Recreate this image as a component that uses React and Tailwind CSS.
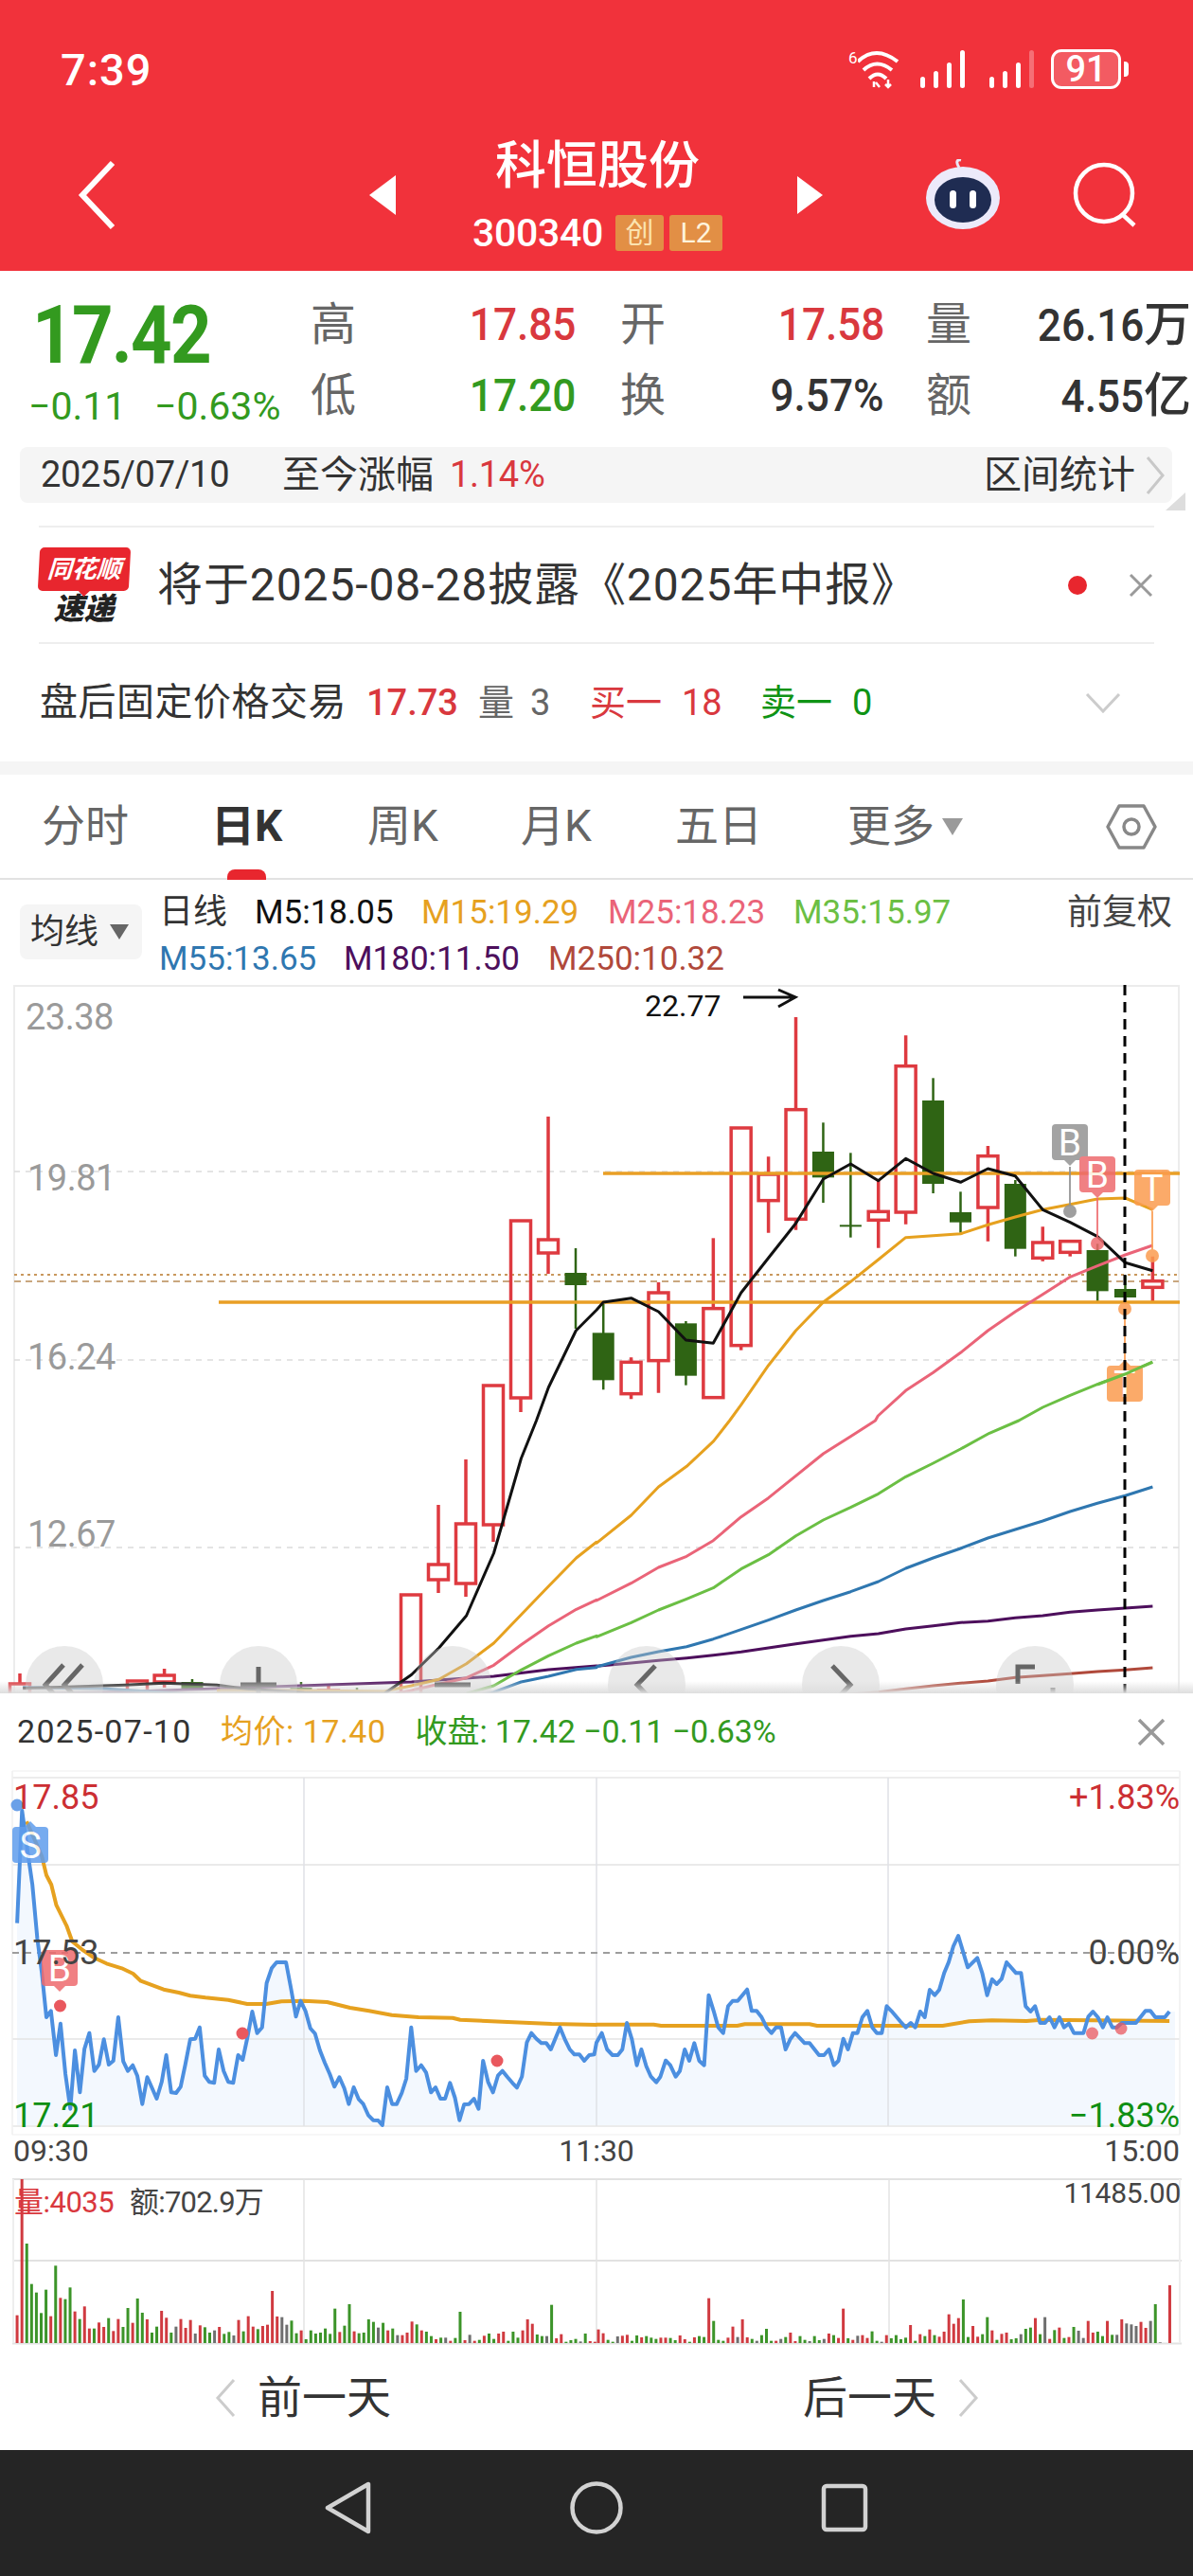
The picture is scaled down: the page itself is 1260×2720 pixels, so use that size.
const RED = '#d9383e';
const GREEN = '#339a1f';

// chart coordinates were read off zoomed crops, these map them back to page px
const za = ([x, y]) => [x / 2.489, 1030 + y / 3];
const zb = ([x, y]) => [630 + x / 2.489, 1030 + y / 3];
const zc = ([x, y]) => [x / 2.489, 1500 + y / 3];
const zd = ([x, y]) => [630 + x / 2.489, 1500 + y / 3];
const ze = ([x, y]) => [x / 2.489, 1790 + y / 3];
const zf = ([x, y]) => [630 + x / 2.489, 1790 + y / 3];
const pts = (list) => list.map((p) => p.map((n) => n.toFixed(1)).join(',')).join(' ');

// x, kind, wick top, body top, body bottom, wick bottom (page px)
const leftCandles = [
  [21, 'r', 1767, 1778, 1795, 1795],
  [145, 'r', 1775, 1775, 1787, 1787],
  [173.6, 'r', 1762, 1769, 1776, 1782],
  [203, 'g', 1773, 1776, 1783, 1785],
  [318, 'g', 1776, 1782, 1792, 1792],
  [347, 'r', 1778, 1785, 1795, 1795],
  [377, 'g', 1782, 1786, 1795, 1795],
  [434, 'r', 1684, 1684, 1795, 1795],
  [463, 'r', 1589, 1652, 1668, 1682],
  [492, 'r', 1541, 1609, 1672, 1686],
  [521, 'r', 1463, 1463, 1610, 1628],
  [550, 'r', 1289, 1289, 1476, 1491],
  [579, 'r', 1179, 1309, 1323, 1345],
  [608, 'g', 1318, 1344, 1357, 1403],
];
// same order, y still in crop units of the right half
const rightCandles = [
  [18, 'g', 1040, 1132, 1282, 1312],
  [91, 'r', 1210, 1225, 1325, 1342],
  [163, 'r', 972, 1005, 1220, 1322],
  [235, 'g', 1095, 1102, 1268, 1298],
  [307, 'r', 832, 1055, 1337, 1337],
  [380, 'r', 483, 483, 1172, 1187],
  [452, 'r', 574, 630, 713, 815],
  [524, 'r', 132, 425, 772, 806],
  [596, 'g', 466, 558, 640, 720],
  [668, 'g', 562, 790, 795, 830],
  [741, 'r', 650, 748, 775, 863],
  [813, 'r', 190, 287, 750, 788],
  [885, 'g', 325, 396, 660, 690],
  [957, 'g', 685, 750, 782, 815],
  [1029, 'r', 540, 572, 735, 842],
  [1101, 'g', 648, 660, 866, 890],
  [1173, 'r', 796, 846, 895, 905],
  [1245, 'r', 842, 842, 877, 890],
  [1317, 'g', 850, 870, 1000, 1032],
  [1390, 'g', 950, 993, 1020, 1040],
  [1462, 'r', 890, 968, 988, 1032],
].map(([x, k, a, b, c, d]) => [630 + x / 2.489, k, 1030 + a / 3, 1030 + b / 3, 1030 + c / 3, 1030 + d / 3]);

const maLines = [
  {
    color: '#4d0f5c',
    points: [
      ...[[140, 1788], [280, 1787], [432, 1785], [570, 1783], [790, 1780], [1010, 1777], [1082, 1776], [1298, 1770], [1442, 1763], [1568, 1759]].map(([x, y]) => [x / 2.489, y]),
      ...[[0, 778], [91, 768], [163, 760], [237, 752], [307, 743], [380, 733], [452, 720], [524, 707], [596, 695], [668, 683], [741, 675], [813, 660], [885, 650], [957, 640], [1029, 635], [1101, 625], [1173, 618], [1245, 607], [1317, 600], [1390, 594], [1462, 588]].map(([x, y]) => zd([x, y])),
    ],
  },
  {
    color: '#b0493b',
    points: [[660, 868], [741, 860], [813, 850], [885, 840], [957, 832], [1029, 825], [1101, 814], [1173, 808], [1245, 802], [1317, 795], [1390, 790], [1462, 783]].map(zd),
  },
  {
    color: '#2f77b0',
    points: [
      ...[[60, 845], [280, 850], [520, 868], [1000, 875], [1260, 870], [1298, 860], [1370, 828], [1442, 810], [1515, 788], [1568, 782]].map(zc),
      ...[[0, 780], [91, 750], [163, 732], [237, 716], [307, 692], [380, 662], [452, 632], [524, 600], [596, 570], [668, 542], [741, 510], [813, 468], [885, 435], [957, 405], [1029, 372], [1101, 345], [1173, 318], [1245, 288], [1317, 262], [1390, 238], [1462, 210]].map(zd),
    ],
  },
  {
    color: '#6bbf44',
    points: [
      ...[[1226, 865], [1298, 840], [1370, 790], [1442, 745], [1515, 705], [1568, 682]].map(zc),
      ...[[0, 685], [91, 640], [163, 600], [237, 565], [307, 530], [380, 470], [452, 425], [524, 365], [596, 315], [668, 275], [741, 232], [813, 178], [885, 135], [957, 90], [1033, 40], [1110, 0]].map(zd),
      ...[[1173, 1368], [1245, 1330], [1317, 1295], [1390, 1262], [1462, 1225]].map(zb),
    ],
  },
  {
    color: '#ea6478',
    points: [
      ...[[1040, 865], [1082, 855], [1154, 835], [1226, 815], [1298, 775], [1370, 710], [1442, 650], [1515, 598], [1568, 568]].map(zc),
      ...[[0, 570], [91, 515], [163, 465], [237, 430], [307, 380], [380, 305], [452, 245], [524, 175], [596, 105], [668, 50], [733, 0]].map(zd),
      ...[[740, 1395], [813, 1315], [885, 1258], [957, 1195], [1029, 1125], [1101, 1065], [1173, 1010], [1245, 955], [1317, 920], [1390, 885], [1462, 855]].map(zb),
    ],
  },
  {
    color: '#e6a11f',
    points: [
      ...[[570, 855], [790, 855], [1010, 858], [1082, 840], [1154, 820], [1226, 770], [1298, 705], [1370, 615], [1442, 525], [1515, 435], [1568, 385]].map(zc),
      ...[[0, 388], [91, 300], [163, 210], [237, 145], [308, 65], [350, 0]].map(zd),
      ...[[380, 1360], [452, 1235], [524, 1125], [596, 1035], [668, 970], [741, 900], [813, 830], [957, 818], [1029, 790], [1101, 765], [1173, 742], [1245, 725], [1317, 708], [1390, 705], [1462, 742]].map(zb),
    ],
  },
  {
    color: '#111111',
    points: [
      ...[[60, 848], [330, 838], [430, 832], [570, 838], [650, 850], [800, 862], [1010, 865], [1082, 805], [1154, 720], [1226, 618], [1298, 420], [1370, 120], [1410, 0]].map(zc),
      ...[[1442, 1305], [1514, 1125]].map(za),
      ...[[0, 1060], [18, 1035], [91, 1022], [163, 1065], [235, 1155], [307, 1165], [380, 1005], [452, 895], [524, 785], [596, 645], [668, 597], [741, 650], [813, 580], [885, 627], [957, 655], [1029, 612], [1101, 635], [1173, 742], [1245, 782], [1317, 827], [1390, 910], [1462, 935]].map(zb),
    ],
  },
];

const priceLeft = [[45, 722], [58, 365], [72, 490], [85, 600], [98, 770], [110, 880], [122, 1020], [134, 1000], [147, 1140], [159, 1040], [172, 1200], [185, 1310], [197, 1125], [210, 1258], [222, 1120], [235, 1070], [248, 1190], [260, 1170], [273, 1090], [286, 1170], [298, 1158], [311, 1020], [324, 1160], [336, 1190], [349, 1172], [361, 1205], [374, 1295], [387, 1210], [400, 1245], [412, 1278], [425, 1225], [437, 1140], [450, 1258], [463, 1260], [475, 1240], [487, 1170], [500, 1090], [513, 1088], [525, 1052], [538, 1205], [550, 1225], [563, 1228], [575, 1122], [588, 1190], [600, 1225], [613, 1228], [626, 1140], [638, 1155], [651, 1080], [663, 1002], [676, 1070], [689, 1052], [701, 912], [714, 865], [727, 846], [752, 846], [765, 930], [778, 1018], [790, 968], [803, 1000], [816, 1055], [828, 1072], [841, 1125], [854, 1165], [867, 1200], [879, 1240], [892, 1210], [905, 1245], [917, 1295], [930, 1242], [943, 1280], [955, 1295], [968, 1330], [981, 1346], [994, 1347], [1005, 1362], [1018, 1242], [1031, 1295], [1043, 1295], [1056, 1260], [1068, 1215], [1081, 1052], [1094, 1190], [1107, 1172], [1120, 1195], [1133, 1258], [1145, 1242], [1158, 1278], [1170, 1278], [1183, 1228], [1196, 1275], [1208, 1346], [1220, 1296], [1233, 1295], [1246, 1278], [1258, 1310], [1270, 1158], [1283, 1225], [1296, 1258], [1309, 1205], [1321, 1190], [1334, 1210], [1347, 1228], [1359, 1243], [1372, 1208], [1385, 1100], [1397, 1070], [1410, 1088], [1423, 1102], [1436, 1102], [1448, 1122], [1472, 1052], [1485, 1090], [1498, 1122], [1510, 1138], [1523, 1138], [1536, 1158], [1549, 1140], [1562, 1138]];
const priceRight = [[0, 1100], [14, 1070], [28, 1122], [42, 1140], [56, 1140], [68, 1122], [80, 1038], [93, 1090], [106, 1172], [118, 1122], [131, 1175], [143, 1208], [157, 1226], [168, 1208], [182, 1157], [194, 1172], [208, 1208], [219, 1190], [232, 1122], [244, 1158], [257, 1102], [270, 1158], [283, 1172], [295, 950], [308, 1000], [320, 1052], [333, 1070], [346, 985], [358, 968], [371, 968], [396, 932], [408, 1000], [421, 1000], [434, 1020], [447, 1052], [460, 1070], [472, 1052], [485, 1052], [497, 1122], [510, 1088], [522, 1070], [547, 1102], [560, 1102], [585, 1140], [598, 1140], [611, 1122], [624, 1172], [636, 1158], [649, 1088], [661, 1122], [674, 1070], [686, 1070], [699, 1020], [712, 1000], [725, 1052], [737, 1070], [750, 1070], [763, 985], [775, 1000], [800, 1035], [813, 1052], [826, 1038], [838, 1052], [851, 1002], [863, 1020], [876, 933], [889, 950], [901, 933], [914, 880], [926, 845], [938, 795], [951, 762], [963, 810], [976, 862], [1001, 832], [1014, 880], [1027, 950], [1040, 900], [1052, 915], [1065, 898], [1078, 846], [1103, 880], [1116, 880], [1128, 985], [1141, 1002], [1153, 985], [1166, 1038], [1179, 1038], [1191, 1020], [1204, 1052], [1217, 1020], [1229, 1052], [1242, 1040], [1255, 1070], [1280, 1070], [1293, 1018], [1305, 1002], [1318, 1020], [1331, 1052], [1343, 1020], [1356, 1052], [1368, 1052], [1381, 1038], [1418, 1038], [1443, 1000], [1456, 1000], [1469, 1020], [1494, 1020], [1506, 1002]];
const pricePath = [...priceLeft.map(ze), ...priceRight.map(zf)];
const avgPath = [
  ...[[70, 400], [110, 510], [122, 570], [135, 600], [148, 665], [175, 730], [190, 780], [215, 805], [245, 830], [280, 850], [320, 865], [350, 882], [370, 905], [415, 925], [430, 932], [470, 942], [500, 952], [540, 958], [600, 965], [650, 978], [700, 978], [740, 970], [800, 968], [860, 972], [920, 990], [970, 1000], [1030, 1013], [1100, 1020], [1190, 1022], [1210, 1028], [1320, 1034], [1450, 1041], [1568, 1044]].map(ze),
  ...[[0, 1043], [150, 1043], [170, 1047], [370, 1047], [390, 1042], [560, 1042], [580, 1047], [910, 1047], [980, 1033], [1040, 1030], [1130, 1032], [1170, 1028], [1506, 1032]].map(zf),
];

const volLeft = 'r225 r-206 g-2 g126 g153 g218 g144 r228 g68 r170 g174 g137 r213 g237 r197 r267 g267 r248 r262 g234 r275 r237 g262 g202 r249 g172 g217 r238 g280 g261 r211 r233 g280 n261 r237 r265 r240 n283 r257 g263 g280 n273 r262 g284 g278 n289 r240 g276 r228 r261 g269 r259 r255 r148 r229 n231 n255 g242 g282 r273 g301 g273 g283 g280 g267 g284 g204 r278 g258 g190 r276 g282 g280 g238 g246 n264 g249 r273 g267 n288 r288 r280 r245 g254 r273 g277 g291 r301 g296 n296 r306 g297 g214 r304 n287 r306 g303 r290 g283 g300 r283 r277 g306 g277 g296 r273 r238 r252 g286 g291 n291 g192 r298 r285 g309 g304 g300 n308 g283 r307 r309'.split(' ');
const volRight = 'r270 r282 g303 g309 n292 r290 r287 g306 g289 r295 g291 g296 g300 r296 r296 g297 g304 r289 r301 g309 r295 g291 g294 r171 g243 g303 g306 r296 r261 n294 r238 r295 g300 n306 g288 g268 g306 r306 n300 g294 r280 r307 g291 g303 n307 g291 g304 n300 r283 g288 r297 r204 g298 r303 n290 r288 r297 g276 g306 n309 r288 g298 g288 g301 g296 r256 g306 r285 g291 r270 g288 r293 r277 r222 r252 r234 g175 g294 r259 r293 g285 g231 r273 g303 r284 r280 g301 g298 n285 g268 g264 r234 g285 n231 r300 g272 r264 g297 r294 g262 n274 n297 r243 r280 g277 g291 r243 g287 n287 r238 n251 n254 n259 r246 r265 n243 g190 n311 _ r130'.split(' ');
const volColor = { r: '#d03a40', g: '#3c9429', n: '#6f6f6f' };
const volBars = [
  ...volLeft.map((v, i) => ({ v, x: (45 + (i * (1564 - 45)) / (volLeft.length - 1)) / 2.489 })),
  ...volRight.map((v, i) => ({ v, x: 630 + (5 + (i * (1507 - 5)) / (volRight.length - 1)) / 2.489 })),
].filter((b) => b.v !== '_');

function Marker({ x, y, label, color, up = false }) {
  // 38px tag with a small point, y is the top of the tag body
  const tip = up ? `${x - 7},${y + 1} ${x},${y - 6} ${x + 7},${y + 1}` : `${x - 7},${y + 37} ${x},${y + 44} ${x + 7},${y + 37}`;
  return (
    <g>
      <rect x={x - 19} y={y} width="38" height="38" rx="4" fill={color} />
      <polygon points={tip} fill={color} />
      <text x={x} y={y + 33} textAnchor="middle" fontSize="39" fill="#fff">{label}</text>
    </g>
  );
}

function KChart() {
  const clipBottom = 1788;
  return (
    <svg width="1260" height="748" viewBox="0 1040 1260 748" className="block">
      <path d="M15 1040V1790M1245 1040V1790M15 1041H1245" stroke="#ececec" strokeWidth="2" fill="none" />
      <path d="M15 1237H1245M15 1436H1245M15 1634H1245" stroke="#dcdcdc" strokeWidth="1.5" strokeDasharray="6 6" />
      <path d="M15 1346H1245" stroke="#c9985d" strokeWidth="2" strokeDasharray="3 4" />
      <path d="M15 1353H1245" stroke="#c9a77f" strokeWidth="2" strokeDasharray="7 5" />
      {[...leftCandles, ...rightCandles].map(([x, kind, top, a, b, bottom]) =>
        kind === 'r' ? (
          <g key={x} stroke="#de3a40" fill="none">
            <path d={`M${x} ${top}V${a}M${x} ${b}V${bottom}`} strokeWidth="3.5" />
            <rect x={x - 10.5} y={a} width="21" height={Math.max(b - a, 3)} strokeWidth="3.5" />
          </g>
        ) : (
          <g key={x}>
            <path d={`M${x} ${top}V${bottom}`} stroke="#2f6414" strokeWidth="2.5" />
            <rect x={x - 11.5} y={a} width="23" height={Math.max(b - a, 2)} fill="#2f6414" />
          </g>
        )
      )}
      <path d="M231 1375H1246M637 1239H1246" stroke="#e99f25" strokeWidth="3.5" />
      {maLines.map((line) => (
        <polyline key={line.color} points={pts(line.points)} fill="none" stroke={line.color} strokeWidth="3" strokeLinejoin="round" />
      ))}

      {/* trade markers */}
      <g opacity="0.85">
        <path d="M1130 1232V1280" stroke="#8f8f8f" strokeWidth="2" />
        <circle cx="1130" cy="1279" r="7" fill="#8f8f8f" />
        <Marker x={1130} y={1187} label="B" color="#949494" />
        <path d="M1159 1265V1313" stroke="#ee6a6e" strokeWidth="2" />
        <circle cx="1159" cy="1313" r="7" fill="#ee6a6e" />
        <Marker x={1159} y={1221} label="B" color="#ee6a6e" />
        <path d="M1217 1279V1326" stroke="#fb9c4f" strokeWidth="2" />
        <circle cx="1217" cy="1326" r="7" fill="#fb9c4f" />
        <Marker x={1217} y={1235} label="T" color="#fb9c4f" />
        <path d="M1188 1382V1437" stroke="#fb9c4f" strokeWidth="2" />
        <circle cx="1188" cy="1382" r="7" fill="#fb9c4f" />
        <Marker x={1188} y={1442} label="T" color="#fb9c4f" up />
      </g>
      <polyline points={pts([[1159, 1462], [1188, 1451], [1217, 1438]])} fill="none" stroke="#6bbf44" strokeWidth="3" />
      <path d={`M1188 1040V${clipBottom}`} stroke="#000" strokeWidth="3" strokeDasharray="11 7" />

      <g fontSize="38" fill="#9a9a9a">
        <text x="27" y="1087" letterSpacing="-0.5">23.38</text>
        <text x="29" y="1257" letterSpacing="-0.5">19.81</text>
        <text x="29" y="1446" letterSpacing="-0.5">16.24</text>
        <text x="29" y="1633" letterSpacing="-0.5">12.67</text>
      </g>
      <text x="681" y="1073" fontSize="32" fill="#111">22.77</text>
      <path d="M785 1053H839M822 1045L840 1053L822 1063" fill="none" stroke="#111" strokeWidth="3" />
    </svg>
  );
}

function ChartButton({ children }) {
  return (
    <div className="w-[82px] h-[82px] rounded-full bg-[#c9c9c9]/40 shrink-0">
      <svg width="82" height="82" viewBox="0 0 82 82" fill="none" stroke="#666666" strokeWidth="5">
        {children}
      </svg>
    </div>
  );
}

function IntradayChart() {
  const first = pricePath[0];
  const last = pricePath[pricePath.length - 1];
  return (
    <svg width="1260" height="421" viewBox="0 1869 1260 421" className="block">
      <polygon points={`${first[0]},2245 ${pts(pricePath)} ${last[0] + 6},${last[1]} ${last[0] + 6},2245`} fill="#f3f8fe" />
      <path d="M13 1870H1246M13 2254H1246" stroke="#f7f7f7" strokeWidth="2" />
      <path d="M13 1877H1246M13 2245H1246" stroke="#ececec" strokeWidth="2" />
      <path d="M13 1969H1246M13 2153H1246" stroke="#e3e3e3" strokeWidth="1.5" />
      <path d="M321 1877V2245M630 1877V2245M938 1877V2245" stroke="#dfe1e6" strokeWidth="1.5" />
      <path d="M13 1870V2254M1246 1870V2254" stroke="#f0f0f0" strokeWidth="1.5" />
      <path d="M13 2062H1246" stroke="#9d9d9d" strokeWidth="2" strokeDasharray="7 6" />
      <polyline points={pts(avgPath)} fill="none" stroke="#e6a11f" strokeWidth="4" strokeLinejoin="round" />
      <polyline points={pts(pricePath)} fill="none" stroke="#4c8fe0" strokeWidth="4" strokeLinejoin="round" />

      <circle cx="18" cy="1906" r="6.5" fill="#6aa0e8" />
      <g opacity="0.85">
        <Marker x={32} y={1929} label="S" color="#5f9ded" up />
        <Marker x={63} y={2059} label="B" color="#ee6a6e" />
      </g>
      {[[63.5, 2118], [256, 2147], [525, 2176], [1153.5, 2147], [1184, 2142]].map(([x, y]) => (
        <circle key={x} cx={x} cy={y} r="6.5" fill="#e9585e" opacity={x > 1000 ? 0.75 : 1} />
      ))}

      <g fontSize="36">
        <text x="14" y="1910" fill="#cc2f33">17.85</text>
        <text x="14" y="2074" fill="#444">17.53</text>
        <text x="14" y="2246" fill="#0f8f12">17.21</text>
        <text x="1246" y="1910" fill="#cc2f33" textAnchor="end">+1.83%</text>
        <text x="1246" y="2074" fill="#444" textAnchor="end">0.00%</text>
        <text x="1246" y="2246" fill="#0f8f12" textAnchor="end">−1.83%</text>
      </g>
      <g fontSize="32" fill="#444">
        <text x="14" y="2282">09:30</text>
        <text x="630" y="2282" textAnchor="middle">11:30</text>
        <text x="1246" y="2282" textAnchor="end">15:00</text>
      </g>
    </svg>
  );
}

function VolumeChart() {
  return (
    <svg width="1260" height="197" viewBox="0 2290 1260 197" className="block">
      <path d="M13 2301H1248M13 2387H1248M13 2474.5H1248" stroke="#e2e2e2" strokeWidth="2" />
      <path d="M321 2301V2474M630 2301V2474M939 2301V2474" stroke="#e3e3e3" strokeWidth="1.5" />
      <path d="M14 2301V2474M1246 2301V2474" stroke="#eeeeee" strokeWidth="2" />
      {volBars.map(({ v, x }) => {
        const top = Number(v.slice(1));
        const h = (313 - top) / 3;
        return <rect key={x} x={x - 1.5} y={2474 - h} width="3" height={h} fill={volColor[v[0]]} />;
      })}
      <text x="15" y="2336" fontSize="31" fill="#d9383e" letterSpacing="-0.5">量:4035</text>
      <text x="137" y="2336" fontSize="31" fill="#444" letterSpacing="-0.8">额:702.9万</text>
      <text x="1247" y="2326" fontSize="30" fill="#444" textAnchor="end" letterSpacing="-0.3">11485.00</text>
    </svg>
  );
}

function Signal({ pale }) {
  return (
    <svg width="48" height="40" viewBox="0 0 48 40" fill="#fff">
      <rect x="0" y="28" width="5" height="12" rx="2.5" />
      <rect x="14" y="22" width="5" height="18" rx="2.5" />
      <rect x="28" y="13" width="5" height="27" rx="2.5" />
      <rect x="42" y="0" width="5" height="40" rx="2.5" opacity={pale ? 0.3 : 1} />
    </svg>
  );
}

function Stat({ label, value, unit, color }) {
  return (
    <>
      <span className="text-[48px] leading-none text-[#666666]">{label}</span>
      <span className="text-right leading-none font-medium" style={{ color }}>
        <span className="inline-block origin-right scale-x-[.92] text-[48px]">{value}</span>
        {unit && <span className="text-[50px]">{unit}</span>}
      </span>
    </>
  );
}

export default function App() {
  return (
    <div className="w-[1260px] h-[2720px] bg-white overflow-hidden flex flex-col text-[#333333] [font-family:Roboto,'Noto_Sans_CJK_SC',sans-serif]">
      {/* red header */}
      <header className="h-[286px] bg-[#f1323b] text-white shrink-0">
        <div className="h-[52px]" />
        <div className="flex h-[42px] items-center pl-[64px]">
          <span className="text-[47px] font-medium leading-none tracking-[1px] w-[832px]">7:39</span>
          <span className="w-[10px] self-start text-[17px] leading-[18px]">6</span>
          <svg width="46" height="42" viewBox="10 0 46 42" fill="none" stroke="#fff" strokeWidth="4">
            <path d="M10 13Q29 -5 52 13" />
            <path d="M16 22Q30 9 46 22" />
            <path d="M22 31Q31 22 40 31" />
            <path d="M27 40V34M33 40L29 35M42 32V40M45 37L42 40L39 37" strokeWidth="2.5" />
          </svg>
          <div className="ml-[20px]"><Signal /></div>
          <div className="ml-[25px]"><Signal pale /></div>
          <div className="ml-[17px] w-[74px] h-[42px] rounded-[11px] border-[3px] border-white bg-white/20 flex items-center justify-center text-[38px] leading-none font-medium">91</div>
          <div className="ml-[3px] w-[5px] h-[16px] rounded-r bg-white" />
        </div>
        <div className="flex items-center h-[192px] pt-[32px]">
          <svg width="44" height="74" viewBox="0 0 44 74" fill="none" stroke="#fff" strokeWidth="6" className="ml-[81px] shrink-0">
            <path d="M38 3L6 37L38 71" />
          </svg>
          <svg width="30" height="42" viewBox="0 0 30 42" fill="#fff" className="ml-[265px] shrink-0">
            <polygon points="28,0 28,42 0,21" />
          </svg>
          <div className="w-[422px] flex flex-col items-center">
            <span className="text-[54px] font-medium leading-[60px]">科恒股份</span>
            <div className="flex items-center mt-[20px]">
              <span className="text-[41px] font-medium leading-none tracking-[-0.3px] mr-[13px]">300340</span>
              <span className="w-[51px] h-[38px] rounded-[3px] bg-[#e28f45] text-[#fbe3b0] text-[30px] leading-[38px] text-center">创</span>
              <span className="ml-[6px] w-[56px] h-[38px] rounded-[3px] bg-[#e28f45] text-[#fff3dc] text-[30px] leading-[38px] text-center">L2</span>
            </div>
          </div>
          <svg width="28" height="40" viewBox="0 0 28 40" fill="#fff" className="shrink-0">
            <polygon points="0,0 0,40 27,20" />
          </svg>
          <svg width="84" height="76" viewBox="0 0 84 76" className="ml-[105px] shrink-0">
            <path d="M38 9C34 3 36 0 40 1" fill="none" stroke="#e8e8f6" strokeWidth="3" />
            <ellipse cx="42" cy="41" rx="39" ry="33" fill="#eceafa" />
            <ellipse cx="42" cy="43" rx="30" ry="24" fill="#1f2c52" />
            <rect x="28" y="33" width="7" height="19" rx="3.5" fill="#fff" />
            <rect x="49" y="33" width="7" height="19" rx="3.5" fill="#fff" />
          </svg>
          <svg width="70" height="70" viewBox="0 0 70 70" fill="none" stroke="#fff" strokeWidth="4.5" className="ml-[74px] shrink-0">
            <ellipse cx="33" cy="33" rx="30" ry="30" />
            <path d="M52 55L65 67" />
          </svg>
        </div>
      </header>

      {/* quote numbers */}
      <section className="h-[186px] shrink-0 flex">
        <div className="w-[328px] pl-[34px] pt-[24px] shrink-0">
          <div className="text-[86px] leading-[88px] font-bold tracking-[-2px] text-[#339a1f] origin-left scale-x-[.885]">17.42</div>
          <div className="flex text-[41px] leading-[50px] text-[#339a1f] -ml-[4px] mt-[6px]">
            <span className="w-[133px]">−0.11</span>
            <span>−0.63%</span>
          </div>
        </div>
        <div className="pt-[19px] grid grid-cols-[48px_232px_47px_48px_231px_44px_48px_232px] auto-rows-[75px] items-center h-fit">
          <Stat label="高" value="17.85" color={RED} />
          <span />
          <Stat label="开" value="17.58" color={RED} />
          <span />
          <Stat label="量" value="26.16" unit="万" color="#333333" />
          <Stat label="低" value="17.20" color={GREEN} />
          <span />
          <Stat label="换" value="9.57%" color="#333333" />
          <span />
          <Stat label="额" value="4.55" unit="亿" color="#333333" />
        </div>
      </section>

      {/* interval bar */}
      <div className="relative ml-[21px] w-[1217px] h-[59px] shrink-0 rounded-lg bg-[#f5f5f5] flex items-center text-[38px] pl-[22px]">
        <span className="w-[255px] tracking-[-0.3px]">2025/07/10</span>
        <span className="text-[40px]">至今涨幅</span>
        <span className="ml-[17px] text-[#d9383e] tracking-[-0.3px]">1.14%</span>
        <span className="ml-auto text-[40px] mr-[9px]">区间统计</span>
        <svg width="24" height="44" viewBox="0 0 24 44" fill="none" stroke="#c8c8c8" strokeWidth="3" className="mr-[6px]">
          <path d="M4 3L20 22L4 41" />
        </svg>
        <svg width="21" height="19" viewBox="0 0 21 19" fill="#dddddd" className="absolute right-[-14px] top-[48px]">
          <polygon points="21,0 21,19 0,19" />
        </svg>
      </div>
      <div className="h-[24px] shrink-0" />

      {/* news */}
      <div className="mx-[41px] h-[125px] shrink-0 border-y-2 border-[#eeeeee] flex items-center">
        <div className="w-[97px] flex flex-col items-center -ml-[1px]">
          <div className="relative w-[96px] h-[46px] bg-[#e8262e] rounded-[5px] -skew-x-3 flex items-center justify-center">
            <span className="text-[26px] leading-none font-bold italic text-white">同花顺</span>
            <span className="absolute left-[42px] top-[45px] w-0 h-0 border-x-[7px] border-x-transparent border-t-[7px] border-t-[#e8262e]" />
          </div>
          <span className="mt-[4px] text-[32px] leading-[30px] font-black italic text-[#222222]">速递</span>
        </div>
        <span className="ml-[29px] text-[48px] leading-none tracking-[0.9px]">将于2025-08-28披露《2025年中报》</span>
        <span className="ml-auto w-[20px] h-[20px] rounded-full bg-[#e8262e]" />
        <svg width="26" height="26" viewBox="0 0 26 26" fill="none" stroke="#9a9a9a" strokeWidth="3" className="ml-[44px] mr-[1px]">
          <path d="M2 2L24 24M24 2L2 24" />
        </svg>
      </div>

      {/* after hours */}
      <div className="h-[124px] shrink-0 pl-[42px] flex items-center text-[38px]">
        <span className="w-[345px] text-[40px] tracking-[0.5px]">盘后固定价格交易</span>
        <span className="w-[118px] text-[#d9383e] font-medium">17.73</span>
        <span className="w-[55px] text-[#666666]">量</span>
        <span className="w-[63px] text-[#666666]">3</span>
        <span className="w-[97px] text-[#d9383e]">买一</span>
        <span className="w-[83px] text-[#d9383e]">18</span>
        <span className="w-[97px] text-[#0f9315]">卖一</span>
        <span className="w-[246px] text-[#0f9315]">0</span>
        <svg width="38" height="22" viewBox="0 0 38 22" fill="none" stroke="#cccccc" strokeWidth="3">
          <path d="M2 2L19 20L36 2" />
        </svg>
      </div>
      <div className="h-[14px] shrink-0 bg-[#f5f5f5]" />

      {/* period tabs */}
      <nav className="h-[111px] shrink-0 pl-[44px] border-b-2 border-[#e2e2e2] grid grid-cols-[179px_165px_162px_163px_182px_273px_54px] items-center text-[46px] text-[#666666]">
        <span>分时</span>
        <span className="relative font-bold text-[#333333]">
          日K
          <span className="absolute left-[17px] top-[80px] w-[41px] h-[11px] rounded-t-lg bg-[#e8262e]" />
        </span>
        <span>周K</span>
        <span>月K</span>
        <span>五日</span>
        <span className="flex items-center whitespace-nowrap">
          更多
          <svg width="22" height="22" viewBox="0 0 22 22" fill="#9a9a9a" className="ml-[8px] shrink-0">
            <polygon points="0,2 22,2 11,20" />
          </svg>
        </span>
        <svg width="54" height="50" viewBox="0 0 54 50" fill="none" stroke="#888888" strokeWidth="3.5" strokeLinejoin="round">
          <polygon points="2,25 14,3 40,3 52,25 40,47 14,47" />
          <circle cx="27" cy="25" r="8" />
        </svg>
      </nav>

      {/* ma legend */}
      <div className="h-[111px] shrink-0 flex pt-[10px]">
        <div className="ml-[21px] mt-[16px] w-[129px] h-[58px] rounded-lg bg-[#f5f5f5] flex items-center pl-[11px] text-[36px] text-[#333333]">
          均线
          <svg width="20" height="18" viewBox="0 0 20 18" fill="#666666" className="ml-[12px]">
            <polygon points="0,1 20,1 10,17" />
          </svg>
        </div>
        <div className="ml-[18px] flex-1 text-[35px] leading-[49px]">
          <div className="flex pr-[22px]">
            <span className="w-[101px] text-[36px]">日线</span>
            <span className="w-[176px] text-[#111111]">M5:18.05</span>
            <span className="w-[197px] text-[#e6a11f]">M15:19.29</span>
            <span className="w-[196px] text-[#ea6478]">M25:18.23</span>
            <span className="text-[#6bbf44]">M35:15.97</span>
            <span className="ml-auto text-[37px] text-[#444444]">前复权</span>
          </div>
          <div className="flex">
            <span className="w-[195px] text-[#2f77b0]">M55:13.65</span>
            <span className="w-[216px] text-[#4d0f5c]">M180:11.50</span>
            <span className="text-[#b0493b]">M250:10.32</span>
          </div>
        </div>
      </div>

      {/* k-line chart, round buttons sit on top of it */}
      <div className="relative h-[748px] shrink-0 overflow-hidden">
        <KChart />
        <div className="absolute left-[27px] top-[698px] flex gap-[123px]">
          <ChartButton><path d="M40 20L21 41L40 62M60 20L41 41L60 62" /></ChartButton>
          <ChartButton><path d="M41 22V62M22 41H60" /></ChartButton>
          <ChartButton><path d="M22 41H60" /></ChartButton>
          <ChartButton><path d="M50 21L31 41L50 61" /></ChartButton>
          <ChartButton><path d="M32 21L51 41L32 61" /></ChartButton>
          <ChartButton><path d="M23 40V22H41M60 44V62H42" /></ChartButton>
        </div>
        <div className="absolute left-0 right-0 bottom-0 h-[13px] bg-linear-to-b from-transparent to-[#dedede]" />
      </div>

      {/* day detail */}
      <div className="h-[81px] shrink-0 flex items-center pl-[18px] text-[34px]">
        <span className="w-[215px] tracking-[1.3px] text-[#333333]">2025-07-10</span>
        <span className="text-[#e6a11f] tracking-[0.5px]">均价: 17.40</span>
        <span className="ml-[31px] text-[#339a1f] tracking-[-0.1px]">收盘: 17.42 −0.11 −0.63%</span>
        <svg width="32" height="32" viewBox="0 0 32 32" fill="none" stroke="#999999" strokeWidth="3.5" className="ml-auto mr-[28px]">
          <path d="M3 3L29 29M29 3L3 29" />
        </svg>
      </div>
      <IntradayChart />
      <VolumeChart />

      {/* day switcher */}
      <div className="h-[100px] shrink-0 flex items-center pb-[10px] pl-[227px] text-[47px] text-[#333333]">
        <svg width="22" height="44" viewBox="0 0 22 44" fill="none" stroke="#cccccc" strokeWidth="3">
          <path d="M20 3L3 22L20 41" />
        </svg>
        <span className="ml-[23px] w-[141px]">前一天</span>
        <span className="ml-[435px] w-[141px]">后一天</span>
        <svg width="22" height="44" viewBox="0 0 22 44" fill="none" stroke="#cccccc" strokeWidth="3" className="ml-[23px]">
          <path d="M2 3L19 22L2 41" />
        </svg>
      </div>

      {/* android nav */}
      <footer className="h-[133px] shrink-0 bg-[#252525] flex items-center pb-[12px] pl-[342px]">
        <svg width="50" height="56" viewBox="0 0 50 56" fill="none" stroke="#d2d2d2" strokeWidth="4.5" strokeLinejoin="round">
          <polygon points="47,3 47,53 4,28" />
        </svg>
        <svg width="56" height="56" viewBox="0 0 56 56" fill="none" stroke="#d2d2d2" strokeWidth="4.5" className="ml-[210px]">
          <circle cx="28" cy="28" r="25.5" />
        </svg>
        <svg width="50" height="52" viewBox="0 0 50 52" fill="none" stroke="#d2d2d2" strokeWidth="4.5" className="ml-[209px]">
          <rect x="3" y="3" width="44" height="46" rx="3" />
        </svg>
      </footer>
    </div>
  );
}
